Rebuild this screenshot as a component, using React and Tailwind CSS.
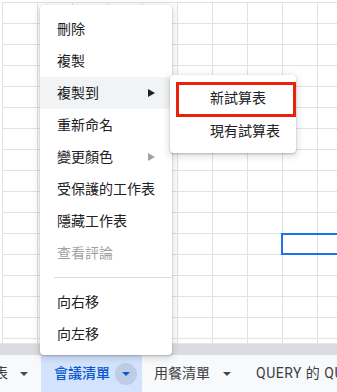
import React from 'react'

const FONT = { fontFamily: 'Roboto, "Noto Sans CJK TC", "Noto Sans", sans-serif' }

function Caret({ className = '' }) {
  return (
    <svg width="8" height="4" viewBox="0 0 8 4" className={`shrink-0 ${className}`}>
      <path d="M0 0h8L4 4z" fill="currentColor" />
    </svg>
  )
}

function Arrow({ className = '' }) {
  return (
    <svg width="7" height="8" viewBox="0 0 7 8" className={`shrink-0 ${className}`}>
      <path d="M0 0l7 4-7 4z" fill="currentColor" />
    </svg>
  )
}

const items = [
  { label: '刪除' },
  { label: '複製' },
  { label: '複製到', sub: true, active: true },
  { label: '重新命名' },
  { label: '變更顏色', sub: true, dim: true },
  { label: '受保護的工作表' },
  { label: '隱藏工作表' },
  { label: '查看評論', disabled: true },
  { sep: true },
  { label: '向右移' },
  { label: '向左移' },
]

export default function App() {
  const cells = Array.from({ length: 10 * 17 })
  return (
    <div className="relative w-[337px] h-[392px] overflow-hidden bg-white flex flex-col whitespace-nowrap" style={FONT}>
      {/* sheet grid */}
      <div className="h-[343px] shrink-0 pl-[2px] pt-[2px] overflow-hidden">
        <div className="grid grid-cols-[repeat(10,35px)] grid-rows-[repeat(17,21px)]">
          {cells.map((_, i) => (
            <div key={i} className="border-l border-t border-[#e2e2e2]" />
          ))}
        </div>
      </div>
      {/* horizontal scroll track */}
      <div className="h-[12px] shrink-0 bg-[#dadce0] border-t border-[#e6e6e6]" />
      {/* sheet tabs */}
      <div className="h-[37px] shrink-0 bg-[#f8f9fa] flex items-stretch text-[14px] text-[#3c4043]">
        <div className="flex shrink-0 items-center ml-[-6px] gap-[12px] pr-[13px]">
          <span>表</span>
          <Caret className="text-[#444746]" />
        </div>
        <div className="flex shrink-0 items-center w-[101px] bg-[#d3e3fd] pl-[13px] text-[#0b57d0] font-medium">
          <span>會議清單</span>
          <span className="ml-[5px] w-[22px] h-[22px] rounded-full bg-[#bdcde6] flex items-center justify-center">
            <Caret className="text-[#0b57d0]" />
          </span>
        </div>
        <div className="flex shrink-0 items-center pl-[12px] gap-[13px]">
          <span>用餐清單</span>
          <Caret className="text-[#444746]" />
        </div>
        <div className="flex shrink-0 items-center pl-[25px] tracking-[0.5px]">
          <span>QUERY 的 QUERY</span>
        </div>
      </div>

      {/* selected cell */}
      <div className="absolute left-[281px] top-[233px] w-[70px] h-[22px] border-2 border-[#1a73e8]" />

      {/* context menu */}
      <div className="absolute left-[40px] top-[5px] w-[132px] h-[350px] bg-white rounded-[4px] py-[8px] shadow-[0_1px_2px_rgba(60,64,67,0.3),0_2px_6px_2px_rgba(60,64,67,0.15)] text-[14px] text-[#202124]">
        {items.map((it, i) =>
          it.sep ? (
            <div key={i} className="my-[8px] ml-[14px] h-px bg-[#dadce0]" />
          ) : (
            <div
              key={i}
              className={`h-[32px] flex items-center pl-[17px] pr-[17px] ${it.active ? 'bg-[#f1f3f4]' : ''} ${it.disabled ? 'text-[#a0a3a6]' : ''}`}
            >
              <span className="flex-1">{it.label}</span>
              {it.sub && <Arrow className={it.dim ? 'text-[#a0a3a6]' : 'text-[#202124]'} />}
            </div>
          )
        )}
      </div>

      {/* submenu */}
      <div className="absolute left-[170px] top-[75px] w-[126px] h-[78px] bg-white rounded-[4px] py-[6px] shadow-[0_1px_2px_rgba(60,64,67,0.3),0_2px_6px_2px_rgba(60,64,67,0.15)] text-[14px] text-[#202124]">
        <div className="h-[34px] flex items-center pl-[40px]">新試算表</div>
        <div className="h-[32px] flex items-center pl-[40px]">現有試算表</div>
      </div>

      {/* highlight box */}
      <div className="absolute left-[176px] top-[82px] w-[120px] h-[35px] border-[3px] border-[#e8230a]" />
    </div>
  )
}
